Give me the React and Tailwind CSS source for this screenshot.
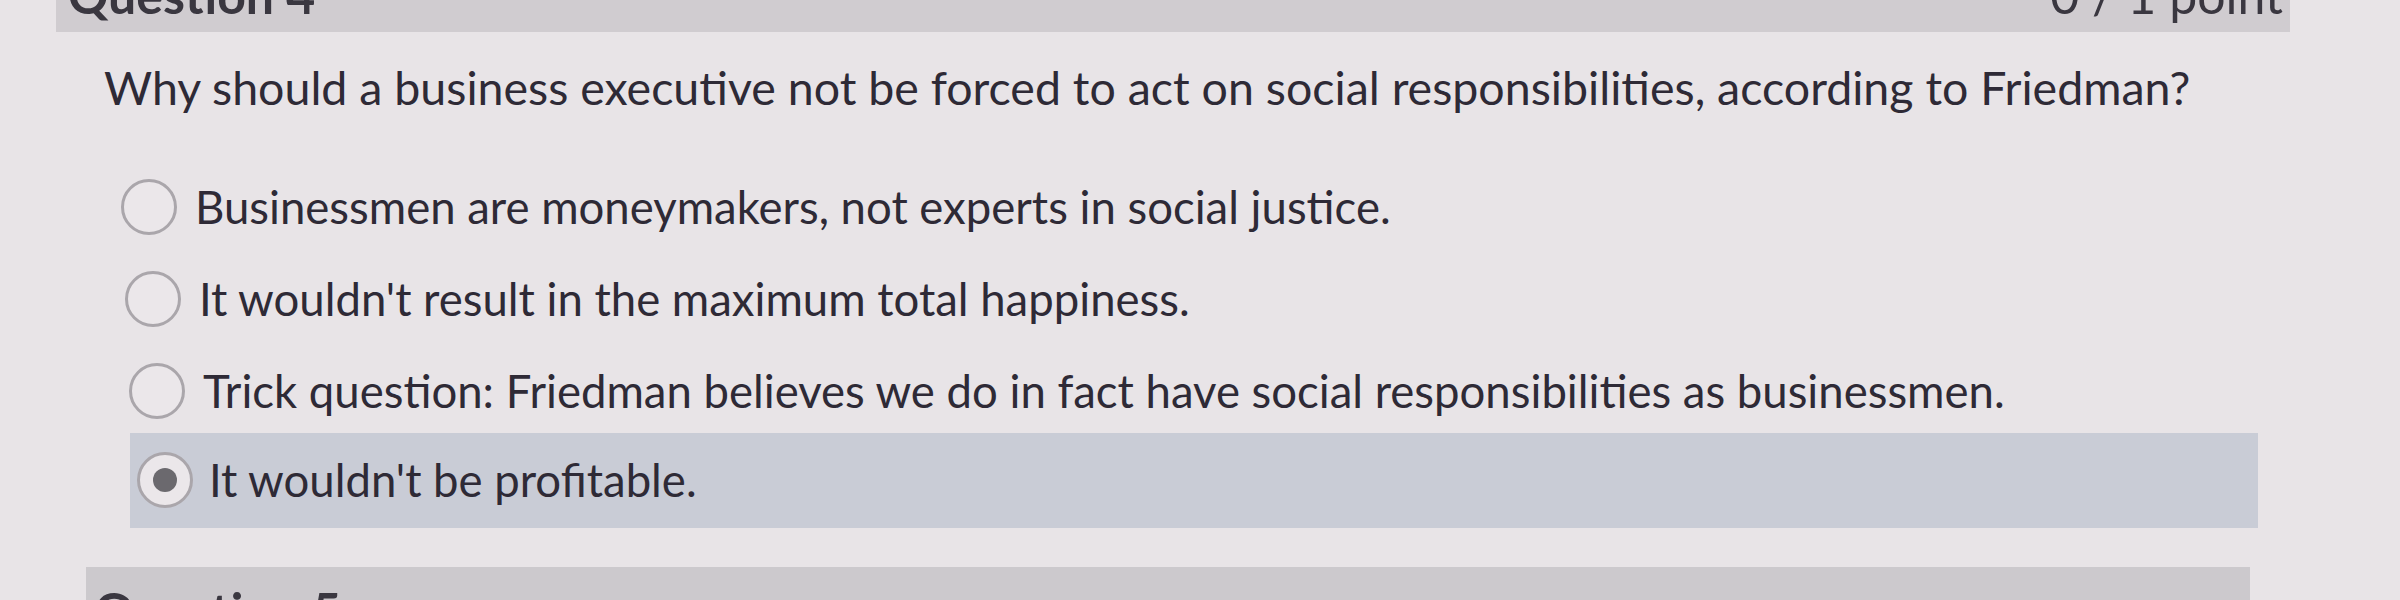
import React from "react";

const options = [
  { text: "Businessmen are moneymakers, not experts in social justice.", pad: "pl-[121px]" },
  { text: "It wouldn't result in the maximum total happiness.", pad: "pl-[125px]" },
  { text: "Trick question: Friedman believes we do in fact have social responsibilities as businessmen.", pad: "pl-[129px]" },
];

function Radio({ checked }) {
  return (
    <span className="flex h-[56px] w-[56px] shrink-0 items-center justify-center rounded-full border-[3px] border-[#aaa6ab] bg-[#ebe7ea]">
      {checked && <span className="h-[24px] w-[24px] rounded-full bg-[#6b696e]" />}
    </span>
  );
}

export default function App() {
  return (
    <div className="relative h-[600px] w-[2400px] overflow-hidden bg-[#e8e4e7] font-['Lato',sans-serif] text-[#2e2a36]">
      {/* Question 4 header (cut off at top) */}
      <div className="ml-[56px] flex h-[32px] w-[2234px] justify-between overflow-hidden bg-[#d0ccd0] pl-[12px] pr-[7px] text-[50px] font-bold leading-none text-[#3a3740]">
        <span className="-mt-[30px]">Question 4</span>
        <span className="-mt-[30px] font-normal">0 / 1 point</span>
      </div>

      {/* Question text */}
      <p className="ml-[104px] mt-[32px] text-[46.5px] leading-none">
        Why should a business executive not be forced to act on social responsibilities, according to Friedman?
      </p>

      {/* Options */}
      <div className="mt-[50px] flex flex-col">
        {options.map((o) => (
          <label key={o.text} className={`flex h-[92px] items-center gap-[18px] ${o.pad}`}>
            <Radio />
            <span className="text-[45.5px] leading-none">{o.text}</span>
          </label>
        ))}
        <div className="ml-[130px] mr-[142px] mt-[-4px] flex h-[95px] items-center gap-[16px] bg-[#c9ccd6] pl-[7px]">
          <Radio checked />
          <span className="text-[45.5px] leading-none">It wouldn't be profitable.</span>
        </div>
      </div>

      {/* Question 5 header (cut off at bottom) */}
      <div className="ml-[86px] mr-[150px] mt-[39px] h-[40px] bg-[#ccc9cd] px-[8px] pt-[18px] text-[50px] font-bold leading-none text-[#3a3740]">
        Question 5
      </div>
    </div>
  );
}
